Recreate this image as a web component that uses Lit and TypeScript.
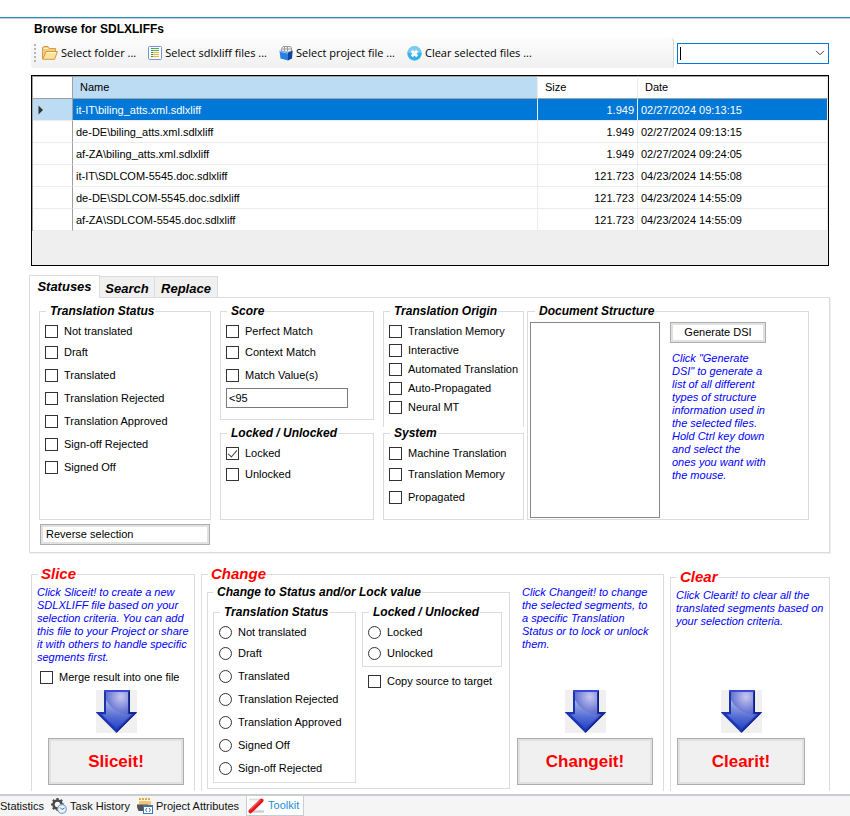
import { LitElement, html, css, svg } from "lit";
import { customElement, state } from "lit/decorators.js";
import { classMap } from "lit/directives/class-map.js";

interface FileRow {
  name: string;
  size: string;
  date: string;
}

const FILES: FileRow[] = [
  { name: "it-IT\\biling_atts.xml.sdlxliff", size: "1.949", date: "02/27/2024 09:13:15" },
  { name: "de-DE\\biling_atts.xml.sdlxliff", size: "1.949", date: "02/27/2024 09:13:15" },
  { name: "af-ZA\\biling_atts.xml.sdlxliff", size: "1.949", date: "02/27/2024 09:24:05" },
  { name: "it-IT\\SDLCOM-5545.doc.sdlxliff", size: "121.723", date: "04/23/2024 14:55:08" },
  { name: "de-DE\\SDLCOM-5545.doc.sdlxliff", size: "121.723", date: "04/23/2024 14:55:09" },
  { name: "af-ZA\\SDLCOM-5545.doc.sdlxliff", size: "121.723", date: "04/23/2024 14:55:09" },
];

const STATUSES = ["Not translated", "Draft", "Translated", "Translation Rejected", "Translation Approved", "Sign-off Rejected", "Signed Off"];
const TARGET_STATUSES = ["Not translated", "Draft", "Translated", "Translation Rejected", "Translation Approved", "Signed Off", "Sign-off Rejected"];
const ORIGINS = ["Translation Memory", "Interactive", "Automated Translation", "Auto-Propagated", "Neural MT"];
const SYSTEMS = ["Machine Translation", "Translation Memory", "Propagated"];
const TABS = ["Statuses", "Search", "Replace"];

const folderIcon = html`<svg width="16" height="14" viewBox="0 0 16 14" aria-hidden="true">
  <path d="M.5 13V1.500l1-1h4.500l1.500 2h6V6" fill="#f3cd7c" stroke="#d39b4a"/>
  <path d="M2 2.500h4" stroke="#fff3c9"/>
  <path d="M.8 13.300L4 5.500h11.500L12.500 13.300z" fill="#fbe29a" stroke="#d39a42"/>
  <path d="M4.700 6.700h9.300" stroke="#fff9dd"/>
</svg>`;

const listIcon = html`<svg width="14" height="14" viewBox="0 0 14 14" aria-hidden="true">
  <rect x=".5" y=".5" width="13" height="13" rx="1" fill="#f8faff" stroke="#7c93d0"/>
  <path d="M3 2.500h2M3 4.500h2M3 6.500h2M3 8.500h2M3 10.500h2" stroke="#2f9a4a"/>
  <path d="M5 2.500h6M5 4.500h6" stroke="#55b04c"/>
  <path d="M5 6.500h6M5 8.500h6M5 10.500h6" stroke="#f0b83a"/>
</svg>`;

const projectIcon = html`<svg width="14" height="15" viewBox="0 0 14 15" aria-hidden="true">
  <path d="M2.500 6V2.500l1.500-2h7.500l1 1.500V6z" fill="#f4f4f4" stroke="#999"/>
  <path d="M5.500 1v4M8.500 1v4M3 3h9" stroke="#999"/>
  <path d="M.5 4.500L9 6.500V14.500L1.500 12.500z" fill="#2b7fe0"/>
  <path d="M9 6.500L13.700 4.500 13 12.500 9 14.500z" fill="#0c47a0"/>
  <path d="M1 5.500l8 1.800" stroke="#8cc4fa"/>
</svg>`;

const clearIcon = html`<svg width="15" height="15" viewBox="0 0 15 15" aria-hidden="true">
  <circle cx="7.500" cy="7.500" r="7.200" fill="#35b3e8"/>
  <path d="M1 6.500a6.500 6.500 0 0 1 13 0q-6.500 2.500-13 0z" fill="#7ccdf0"/>
  <path d="M4.800 4.800l5.400 5.400M10.200 4.800l-5.400 5.400" stroke="#fff" stroke-width="2.800"/>
</svg>`;

const historyIcon = html`<svg width="16" height="16" viewBox="0 0 16 16" aria-hidden="true">
  <circle cx="6.500" cy="6.500" r="4" fill="none" stroke="#4a4a4a" stroke-width="2.500"/>
  <path d="M6.500 0v2.500M6.500 10.500v2.500M0 6.500h2.500M10.500 6.500h2.500M1.900 1.900l1.700 1.700M11.100 1.900L9.400 3.600M1.900 11.100l1.700-1.700" stroke="#4a4a4a" stroke-width="2.200"/>
  <circle cx="11" cy="11" r="4.300" fill="#eef4fa" stroke="#7ba3cc" stroke-width="1.200"/>
  <path d="M9 9.500l2 2 2.500-1.500" fill="none" stroke="#3f6f9f"/>
</svg>`;

const attributesIcon = html`<svg width="16" height="16" viewBox="0 0 16 16" aria-hidden="true">
  <path d="M2 3h12v5H2z" fill="#f4c56a"/>
  <path d="M2 1h2M5 1h2M8 1h2M11 1h2" stroke="#dfa94b" stroke-width="2"/>
  <path d="M0 6.500h11v1.500H6V13H1.500L0 9z" fill="#555"/>
  <rect x="6.500" y="7.500" width="9" height="8" fill="#fff" stroke="#3f74ae"/>
  <path d="M6.500 8.500h9" stroke="#3f74ae"/>
  <path d="M10 10l-1.500 2 1.500 2M12 10l1.500 2-1.500 2" fill="none" stroke="#3f74ae"/>
</svg>`;

const toolkitIcon = html`<svg width="17" height="16" viewBox="0 0 17 16" aria-hidden="true">
  <path d="M1 1.500h11" stroke="#dedede" stroke-width="2"/>
  <path d="M5 13.500h11" stroke="#cfcfcf" stroke-width="2.500"/>
  <path d="M13.500 2.500L2.500 13.300" stroke="#e3181b" stroke-width="4" stroke-linecap="round"/>
  <path d="M12.500 2L2.500 11.800" stroke="#ff7a70"/>
</svg>`;

const downArrow = html`<svg class="arrow" width="41" height="43" viewBox="0 0 41 43" aria-hidden="true">
  <defs>
    <radialGradient id="body" cx=".62" cy=".14" r=".75">
      <stop offset="0" stop-color="#c8c8f0"/>
      <stop offset=".5" stop-color="#6a78d4"/>
      <stop offset="1" stop-color="#2340c0"/>
    </radialGradient>
    <linearGradient id="shine" x1="0" y1="0" x2="0" y2="1">
      <stop offset="0" stop-color="#b9c3f0"/>
      <stop offset=".6" stop-color="#5570d6"/>
      <stop offset="1" stop-color="#2a48c8"/>
    </linearGradient>
  </defs>
  ${svg`<path d="M9 1h24v22h6L20.500 41.500 2 23h7z" fill="url(#body)" stroke="#1c33b0" stroke-width="2"/>
  <path d="M10 10q6 12 23 15.500L20.500 38.500 6 24.500h4z" fill="url(#shine)" opacity=".8"/>
  <path d="M8 1h26" stroke="#3a48d8" stroke-width="2"/>
  <path d="M33.500 1v22h6L20.500 42" fill="none" stroke="#101c6c"/>`}
</svg>`;

@customElement("app-root")
export class AppRoot extends LitElement {
  @state() private selected = 0;
  @state() private tab = "Statuses";

  static styles = css`
    :host {
      display: flex;
      flex-direction: column;
      min-height: 100vh;
      background: #fff;
      color: #000;
      font: 11px/13px "Liberation Sans", Arial, sans-serif;
    }
    *, *::before { box-sizing: border-box; }
    button, input, select { font: inherit; color: inherit; margin: 0; border-radius: 0; }
    svg { display: block; flex: none; }
    .strip { height: 19px; border-bottom: 1px solid #c9cdd0; flex: none; }
    .strip::before { content: ""; display: block; height: 18px; border-bottom: 1px solid #1b8fc6; }
    main { padding: 2px 20px 3px 31px; display: flex; flex-direction: column; flex: 1; }
    h1 { margin: 0 3px 1px; font-size: 12px; line-height: 16px; }

    .bar { display: flex; align-items: center; gap: 3px; margin-bottom: 7px; margin-right: 1px; }
    .toolbar {
      flex: 1; height: 30px; display: flex; align-items: center; gap: 12px; padding-left: 3px;
      background: linear-gradient(#fdfdfd, #f0f0f0); border-right: 1px solid #d4d4d4; border-radius: 3px;
    }
    .grip { width: 2px; height: 18px; margin-right: -6px; background: repeating-linear-gradient(#b5b5b5 0 2px, transparent 2px 4px); }
    .tool {
      display: flex; align-items: center; gap: 3px; padding: 0; border: 0; background: none; white-space: nowrap;
      font: 11px/16px "Open Sans", "Noto Sans", sans-serif;
    }
    .combo { width: 152px; height: 21px; display: flex; align-items: center; border: 1px solid #0078d7; padding-left: 2px; }
    .caret { width: 1px; height: 13px; background: #000; }
    .combo input { flex: 1; min-width: 0; border: 0; outline: 0; padding: 0 2px; background: none; }
    .drop { border: 0; background: none; padding: 0 3px; }

    .grid-box {
      height: 191px; margin-right: 1px; background: #efefef; border: 1px solid #000; overflow: hidden;
    }
    table { width: 100%; table-layout: fixed; border-spacing: 0; border-left: 1px solid #a0a0a0; }
    .c-head { width: 40px; }
    .c-size { width: 100px; }
    .c-date { width: 190px; }
    th, td { padding: 0 3px; background: #fff; border-right: 1px solid #ececec; border-bottom: 1px solid #ececec; font-weight: normal; text-align: left; white-space: nowrap; overflow: hidden; }
    thead th { height: 23px; padding: 0 7px; border-bottom-color: #a0a0a0; border-top: 1px solid #a0a0a0; }
    tbody th, tbody td { height: 22px; padding-top: 1px; }
    thead th.key, tbody th { border-right-color: #a0a0a0; }
    thead .sorted { background: #bcdcf4; }
    .num { text-align: right; }
    tr.on td { background: #0078d7; color: #fff; }
    tr.on th { background: #bcdcf4; }
    .mark { margin-left: 2px; }

    .tabs { display: flex; align-items: flex-end; margin: 9px 0 0 -2px; }
    .tab {
      height: 21px; padding: 3px 0 0; border: 1px solid #dcdcdc; border-left: 0; border-bottom: 0; background: #f0f0f0;
      font-weight: bold; font-style: italic; font-size: 13px; line-height: 16px; width: 55px; text-align: center;
    }
    .tab:last-child { width: 63px; }
    .tab.on { height: 23px; width: 71px; padding: 0; background: #fff; border-left: 1px solid #dcdcdc; margin-bottom: -1px; z-index: 1; }
    .panel { border: 1px solid #dcdcdc; box-shadow: 1px 1px 0 #f0f0f0; padding: 7px 20px 7px 9px; margin-left: -2px; margin-right: 0; }

    .groups { display: flex; gap: 9px; }
    .col { display: flex; flex-direction: column; }
    .w-status { width: 172px; }
    .w-score { width: 154px; gap: 7px; }
    .w-origin { width: 141px; }
    .right { flex: 1; display: flex; gap: 3px; }
    .grow { flex: 1; }
    fieldset { min-width: 0; margin: 0; border: 1px solid #dcdcdc; padding: 4px 5px 2px; }
    legend { margin-left: 1px; padding: 0 1px 0 4px; font-weight: bold; font-style: italic; font-size: 12px; line-height: 13px; white-space: nowrap; }
    .list { display: grid; grid-template-rows: 19px; grid-auto-rows: 23px; }
    .tight .list { grid-auto-rows: 19px; }
    .tight { border-bottom: 0; padding-bottom: 10px; }
    .score { padding-bottom: 11px; }
    .opt { display: flex; align-items: center; gap: 6px; white-space: nowrap; }
    .opt input { appearance: none; width: 13px; height: 13px; flex: none; border: 1px solid #333; background: #fff; display: grid; place-items: center; }
    .opt input[type="radio"] { border-radius: 50%; }
    .opt input:checked::before { content: ""; width: 5px; height: 9px; border: solid #444; border-width: 0 1px 1px 0; transform: translateY(-1px) rotate(40deg); }
    .opt input[type="radio"]:checked::before { width: 7px; height: 7px; border: 0; border-radius: 50%; background: #333; transform: none; }
    .value { width: 122px; height: 20px; margin-top: 1px; border: 1px solid #7a7a7a; padding: 0 2px; background: #fff; }

    .structure { flex: 1; padding: 4px 2px 1px; }
    .structure > legend { margin-left: 5px; }
    .dsi { display: flex; gap: 10px; align-items: flex-start; }
    .nodes { width: 130px; height: 196px; border: 1px solid #828790; background: #fff; }
    .btn { height: 21px; padding: 0 3px; background: #fff; border: 1px solid #adadad; box-shadow: inset 0 0 0 2px #e1e1e1; }
    .reverse { width: 170px; margin: 4px 0 0 1px; padding-left: 5px; text-align: left; display: block; }
    .generate { width: 96px; }
    .hint { margin: 0; color: #00f; font-style: italic; white-space: pre; }
    .dsi .hint { margin: 9px 0 0 2px; }

    .actions { display: flex; gap: 6px; margin-top: 13px; flex: 1; }
    .action { display: flex; border-bottom: 0; padding: 4px 5px 2px; }
    .action > legend { color: #f00; font-size: 15px; line-height: 16px; padding-left: 3px; }
    .slice { width: 164px; }
    .change { flex: 1; gap: 7px; }
    .clear { width: 160px; margin-top: 3px; }
    .stack { display: flex; flex-direction: column; flex: 1; padding-bottom: 4px; }
    .change .hint { padding-left: 5px; }
    .merge { margin: 7px 3px 0; }
    .go { width: 136px; margin: auto auto 0 11px; display: flex; flex-direction: column; align-items: center; gap: 5px; }
    .change .go { margin-left: 0; }
    .clear .go { width: 128px; margin-left: 1px; }
    .arrow { background: #f0f0f0; }
    .big { width: 100%; height: 47px; background: #f0f0f0; border: 1px solid #adadad; box-shadow: inset 0 0 0 2px #e1e1e1; color: #f00; font-weight: bold; font-size: 17px; padding: 0; }
    .target { width: 303px; padding: 7px 5px 5px; }
    .target > legend { margin-left: 0; }
    .pair { display: flex; gap: 6px; align-items: flex-start; }
    .w-set { width: 143px; }
    .w-lock { width: 140px; }
    .w-lock .lock { padding-bottom: 1px; }
    .copy { margin: 8px 6px 0; }

    footer { height: 22px; flex: none; display: flex; background: #f5f5f5; border-top: 2px solid #c6ced2; overflow: hidden; }
    footer nav { display: flex; }
    footer a { display: flex; align-items: center; gap: 3px; color: #111; text-decoration: none; margin-right: 7px; white-space: nowrap; }
    footer a.on { background: #fff; border: 1px solid #c6ced2; border-top: 0; color: #1b8fd2; padding: 0 4px 0 1px; margin: 0; }
  `;

  private checks(items: string[]) {
    return html`<div class="list">
      ${items.map((t) => html`<label class="opt"><input type="checkbox" ?checked=${t === "Locked"} />${t}</label>`)}
    </div>`;
  }

  private radios(name: string, items: string[]) {
    return html`<div class="list">
      ${items.map((t) => html`<label class="opt"><input type="radio" name=${name} />${t}</label>`)}
    </div>`;
  }

  private go(label: string) {
    return html`<div class="go">${downArrow}<button class="big">${label}</button></div>`;
  }

  private renderBrowse() {
    return html`
      <h1>Browse for SDLXLIFFs</h1>
      <div class="bar">
        <div class="toolbar" role="toolbar">
          <span class="grip"></span>
          <button class="tool">${folderIcon}Select folder ...</button>
          <button class="tool">${listIcon}Select sdlxliff files ...</button>
          <button class="tool">${projectIcon}Select project file ...</button>
          <button class="tool">${clearIcon}Clear selected files ...</button>
        </div>
        <div class="combo">
          <span class="caret"></span>
          <input type="text" aria-label="Project" />
          <button class="drop" aria-label="Open list">
            <svg width="10" height="6" viewBox="0 0 10 6"><path d="M1 .8l4 4 4-4" fill="none" stroke="#444"/></svg>
          </button>
        </div>
      </div>
      <div class="grid-box">
        <table>
          <colgroup><col class="c-head" /><col /><col class="c-size" /><col class="c-date" /></colgroup>
          <thead>
            <tr><th class="key"></th><th class="sorted">Name</th><th>Size</th><th>Date</th></tr>
          </thead>
          <tbody>
            ${FILES.map((f, i) => html`
              <tr class=${classMap({ on: i === this.selected })} @click=${() => (this.selected = i)}>
                <th>${i === this.selected
                  ? html`<svg class="mark" width="6" height="10" viewBox="0 0 6 10"><path d="M.5 .5v9L5 5z" fill="#333"/></svg>`
                  : ""}</th>
                <td>${f.name}</td>
                <td class="num">${f.size}</td>
                <td>${f.date}</td>
              </tr>`)}
          </tbody>
        </table>
      </div>`;
  }

  private renderPanel() {
    return html`
      <div class="tabs" role="tablist">
        ${TABS.map((t) => html`<button role="tab" class=${classMap({ tab: true, on: t === this.tab })} @click=${() => (this.tab = t)}>${t}</button>`)}
      </div>
      <section class="panel">
        <div class="groups">
          <fieldset class="w-status"><legend>Translation Status</legend>${this.checks(STATUSES)}</fieldset>
          <div class="col w-score">
            <fieldset class="score">
              <legend>Score</legend>
              ${this.checks(["Perfect Match", "Context Match", "Match Value(s)"])}
              <input class="value" type="text" aria-label="Match value" value="<95" />
            </fieldset>
            <fieldset class="grow"><legend>Locked / Unlocked</legend>${this.checks(["Locked", "Unlocked"])}</fieldset>
          </div>
          <div class="right">
            <div class="col w-origin">
              <fieldset class="tight"><legend>Translation Origin</legend>${this.checks(ORIGINS)}</fieldset>
              <fieldset class="grow"><legend>System</legend>${this.checks(SYSTEMS)}</fieldset>
            </div>
            <fieldset class="structure">
              <legend>Document Structure</legend>
              <div class="dsi">
                <select class="nodes" multiple aria-label="Document Structure"></select>
                <div>
                  <button class="btn generate">Generate DSI</button>
                  <p class="hint">${'Click "Generate\nDSI" to generate a\nlist of all different\ntypes of structure\ninformation used in\nthe selected files.\nHold Ctrl key down\nand select the\nones you want with\nthe mouse.'}</p>
                </div>
              </div>
            </fieldset>
          </div>
        </div>
        <button class="btn reverse">Reverse selection</button>
      </section>`;
  }

  private renderActions() {
    return html`
      <div class="actions">
        <fieldset class="action slice">
          <legend>Slice</legend>
          <div class="stack">
            <p class="hint">${"Click Sliceit! to create a new\nSDLXLIFF file based on your\nselection criteria. You can add\nthis file to your Project or share\nit with others to handle specific\nsegments first."}</p>
            <label class="opt merge"><input type="checkbox" />Merge result into one file</label>
            ${this.go("Sliceit!")}
          </div>
        </fieldset>
        <fieldset class="action change">
          <legend>Change</legend>
          <fieldset class="target">
            <legend>Change to Status and/or Lock value</legend>
            <div class="pair">
              <fieldset class="w-set"><legend>Translation Status</legend>${this.radios("status", TARGET_STATUSES)}</fieldset>
              <div class="w-lock">
                <fieldset class="lock"><legend>Locked / Unlocked</legend>${this.radios("lock", ["Locked", "Unlocked"])}</fieldset>
                <label class="opt copy"><input type="checkbox" />Copy source to target</label>
              </div>
            </div>
          </fieldset>
          <div class="stack">
            <p class="hint">${"Click Changeit! to change\nthe selected segments, to\na specific Translation\nStatus or to lock or unlock\nthem."}</p>
            ${this.go("Changeit!")}
          </div>
        </fieldset>
        <fieldset class="action clear">
          <legend>Clear</legend>
          <div class="stack">
            <p class="hint">${"Click Clearit! to clear all the\ntranslated segments based on\nyour selection criteria."}</p>
            ${this.go("Clearit!")}
          </div>
        </fieldset>
      </div>`;
  }

  render() {
    return html`
      <div class="strip"></div>
      <main>${this.renderBrowse()}${this.renderPanel()}${this.renderActions()}</main>
      <footer>
        <nav>
          <a href="#statistics">Statistics</a>
          <a href="#history">${historyIcon}Task History</a>
          <a href="#attributes">${attributesIcon}Project Attributes</a>
          <a href="#toolkit" class="on">${toolkitIcon}Toolkit</a>
        </nav>
      </footer>`;
  }
}
